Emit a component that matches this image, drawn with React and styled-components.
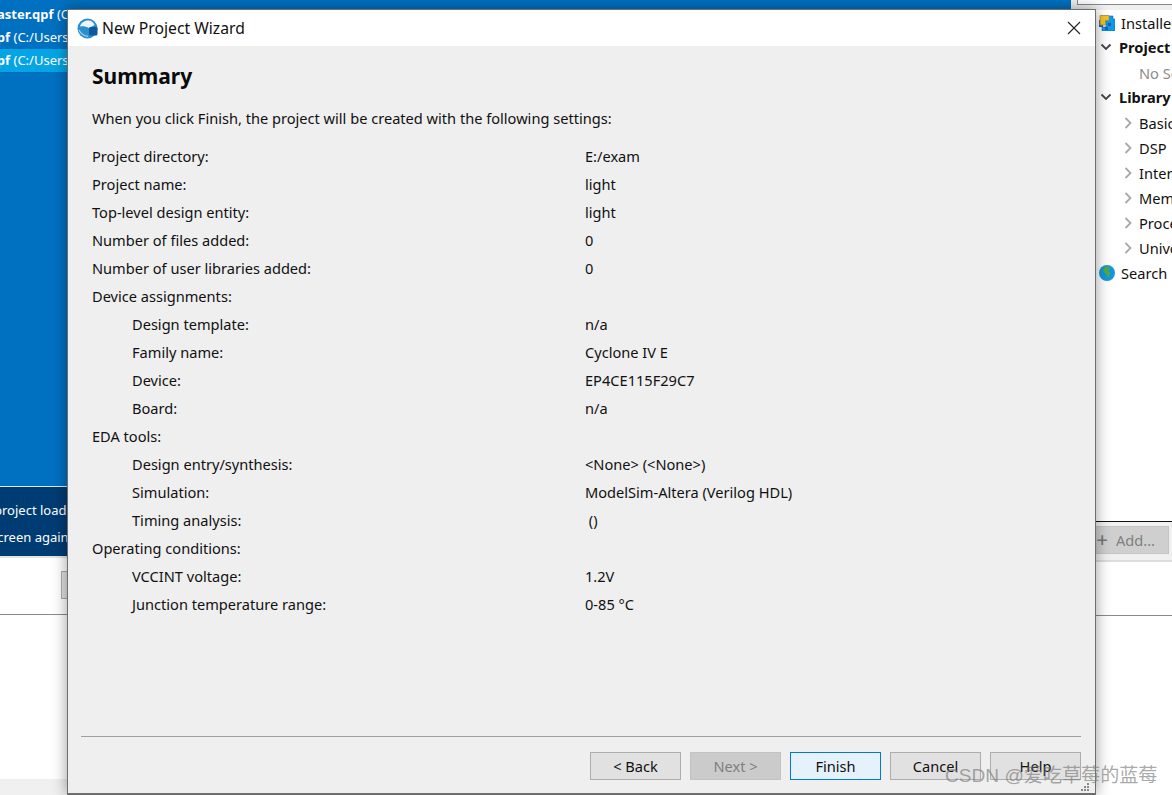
import React from "react";
import styled, { createGlobalStyle } from "styled-components";

const Global = createGlobalStyle`
  html, body { margin: 0; padding: 0; width: 1172px; height: 795px; overflow: hidden; background: #fff; }
  body { font-family: "Noto Sans", "Open Sans", sans-serif; font-size: 14.6px; color: #111; }
`;

const Desktop = styled.div`
  position: relative;
  display: flex;
  width: 1172px;
  height: 795px;
  overflow: hidden;
`;

const Main = styled.div`
  width: 1071px;
  height: 795px;
  display: flex;
  flex-direction: column;
  background: #fff;
`;

const RecentPane = styled.div`
  flex: none;
  background: #0071c1;
  border-bottom: 1px solid #dfeaf3;
  padding-top: 3px;
  height: 483px;
  overflow: hidden;
`;

const RecentRow = styled.div`
  height: 23px;
  line-height: 22px;
  white-space: nowrap;
  color: #fff;
  font-size: 13px;
  background: ${(p) => (p.$active ? "#05a4e4" : "transparent")};
  b { font-weight: 700; }
  text-indent: ${(p) => p.$shift}px;
`;

const Notice = styled.div`
  height: 69px;
  flex: none;
  background: #003c74;
  color: #fff;
  font-size: 13px;
  line-height: 27px;
  padding-top: 10px;
  box-sizing: border-box;
  white-space: nowrap;
`;

const NoticeLine = styled.div`
  text-indent: ${(p) => p.$shift}px;
`;

const ToolStrip = styled.div`
  height: 59px;
  flex: none;
  border-top: 2px solid #e4e4e4;
  border-bottom: 1px solid #8a8a8a;
  box-sizing: border-box;
  padding: 13px 0 0 61px;
  background: #fff;
`;

const StripButton = styled.div`
  width: 20px;
  height: 28px;
  background: #e1e1e1;
  border: 1px solid #adadad;
  box-sizing: border-box;
`;

const Output = styled.div`
  flex: 1;
  background: #fff;
`;

const StatusBar = styled.div`
  height: 16px;
  flex: none;
  background: #f0f0f0;
`;

const Side = styled.div`
  width: 101px;
  height: 795px;
  flex: none;
  background: #fff;
  display: flex;
  flex-direction: column;
`;

const SideTop = styled.div`
  height: 10px;
  flex: none;
  background: #f0f0f0;
  padding-left: 6px;
  box-sizing: border-box;
`;

const SearchBox = styled.div`
  height: 5px;
  background: #fff;
  border: 1px solid #8a8a8a;
  border-top: none;
  border-right: none;
  box-sizing: border-box;
`;

const Tree = styled.div`
  height: 511px;
  flex: none;
  padding: 0 0 0 27px;
  box-sizing: border-box;
  overflow: hidden;
`;

const TreeRow = styled.div`
  height: 25px;
  box-sizing: border-box;
  display: flex;
  align-items: center;
  white-space: nowrap;
  padding-left: ${(p) => p.$indent}px;
  padding-bottom: ${(p) => (p.$bold ? 2 : 0)}px;
  gap: ${(p) => p.$gap}px;
  font-weight: ${(p) => (p.$bold ? 700 : 400)};
  color: ${(p) => (p.$muted ? "#8c8c8c" : "#111")};
  font-size: 14.6px;
  svg { flex: none; }
`;

const AddBar = styled.div`
  height: 41px;
  flex: none;
  border-top: 1px solid #111;
  border-bottom: 2px solid #dcdcdc;
  background: #f0f0f0;
  box-sizing: border-box;
  padding: 4px 3px 0 0;
`;

const AddButton = styled.div`
  height: 28px;
  background: #cfcfcf;
  border: 1px solid #c4c4c4;
  box-sizing: border-box;
  display: flex;
  align-items: center;
  justify-content: flex-end;
  gap: 8px;
  padding-right: 13px;
  color: #808080;
  font-size: 14.6px;
`;

const PlusSign = styled.span`
  font-size: 20px;
  line-height: 20px;
  font-weight: 500;
  color: #777;
`;

const SideRule = styled.div`
  height: 54px;
  flex: none;
  border-bottom: 1px solid #8a8a8a;
  box-sizing: border-box;
`;

const Dialog = styled.div`
  position: absolute;
  left: 67px;
  top: 9px;
  width: 1029px;
  height: 786px;
  border: 1px solid #6e6e6e;
  border-bottom-width: 2px;
  box-sizing: border-box;
  background: #efefef;
  display: flex;
  flex-direction: column;
  box-shadow: 0 0 14px rgba(0, 0, 0, 0.4);
`;

const TitleBar = styled.div`
  height: 36px;
  flex: none;
  background: #fff;
  display: flex;
  align-items: center;
  padding: 0 14px 0 9px;
  gap: 4px;
  font-size: 15.7px;
`;

const TitleText = styled.span`
  flex: 1;
  color: #111;
`;

const Body = styled.div`
  flex: 1;
  padding: 0 14px 0 24px;
  display: flex;
  flex-direction: column;
  min-height: 0;
`;

const Heading = styled.h1`
  margin: 15px 0 0;
  font-size: 21px;
  line-height: 30px;
  font-weight: 700;
  color: #0a0a0a;
`;

const Intro = styled.p`
  margin: 13px 0 0;
  line-height: 28px;
`;

const Settings = styled.div`
  margin-top: 10px;
  display: flex;
  flex-direction: column;
`;

const Setting = styled.div`
  height: 28px;
  line-height: 28px;
  display: grid;
  grid-template-columns: 493px 1fr;
`;

const SettingName = styled.span`
  padding-left: ${(p) => (p.$sub ? 40 : 0)}px;
`;

const Footer = styled.div`
  margin: auto 0 0 -11px;
  border-top: 1px solid #a0a0a0;
  height: 41px;
  flex: none;
  display: flex;
  justify-content: flex-end;
  align-items: flex-start;
  padding-top: 15px;
  gap: 9px;
`;

const Button = styled.button`
  width: 91px;
  height: 28px;
  margin: 0;
  padding: 0;
  font: inherit;
  color: ${(p) => (p.$disabled ? "#808080" : "#111")};
  background: ${(p) => (p.$disabled ? "#cbcbcb" : p.$primary ? "#e5f1fb" : "#e1e1e1")};
  border: 1px solid ${(p) => (p.$disabled ? "#c2c2c2" : p.$primary ? "#0078d7" : "#adadad")};
`;

const Watermark = styled.div`
  position: absolute;
  left: 945px;
  top: 762px;
  font-family: "Liberation Sans", "Noto Sans CJK SC", sans-serif;
  font-size: 19.1px;
  line-height: 28px;
  color: rgba(120, 120, 120, 0.65);
  white-space: nowrap;
`;

const Grip = styled.svg`
  position: absolute;
  left: 1081px;
  top: 783px;
`;

const Chevron = ({ open }) => (
  <svg width="12" height="12" viewBox="0 0 12 12" fill="none" stroke={open ? "#444" : "#a8a8a8"} strokeWidth="1.8">
    {open ? <path d="M1.5 3.5 6 8l4.5-4.5" /> : <path d="M3.500 1 8.500 6l-5 5" />}
  </svg>
);

const Logo = () => (
  <svg width="21" height="21" viewBox="0 0 21 21">
    <circle cx="10.5" cy="10.5" r="10" fill="#2a8fcf" />
    <path d="M3 8.500C4 4.500 8 2 12 2.500c3 .4 5 2.500 5.500 4.500L12 10C9 8.400 6 8 3 8.500z" fill="#eaf4fa" />
    <rect x="12" y="9" width="8.500" height="8.500" rx="1.500" fill="#0c5a9e" />
    <path d="M2 12c2 4 5.500 6 9 6.400" stroke="#a9d3ec" strokeWidth="1.200" fill="none" />
  </svg>
);

const CloseIcon = () => (
  <svg width="14" height="14" viewBox="0 0 14 14" stroke="#222" strokeWidth="1.100" fill="none">
    <path d="M1 1l12 12M13 1 1 13" />
  </svg>
);

const PuzzleIcon = () => (
  <svg width="16" height="16" viewBox="0 0 16 16">
    <rect x="0" y="5" width="4" height="7" fill="#1a5fb0" />
    <path d="M5 1h9v3h2v12H3v-4h4V8H5z" fill="#0d9be8" stroke="#1463b5" strokeWidth=".6" />
    <path d="M1 0.500h9v5H6.500v4.500H1z" fill="#f3c51c" stroke="#a9895a" strokeWidth=".8" />
    <path d="M9 8h3v3H9zM6 12h3v3H6z" fill="#1463b5" />
  </svg>
);

const GlobeIcon = () => (
  <svg width="16" height="16" viewBox="0 0 16 16">
    <circle cx="8" cy="8" r="8" fill="#1496e0" />
    <path d="M6 2.200c2-.8 4.500-.4 5 1 .3 1-1.400 1.400-2 2.500-.3.7 1.800 1 2.200 2.200.3 1-1 2.600-1.800 4-.6 1-1.300.6-1.400-.5-.1-1.400-.4-2.200-1.400-2.800C5.400 7.900 3.800 7 4 5.500 4.200 4 5 3 6 2.200z" fill="#4fae3a" />
  </svg>
);

const settings = [
  ["Project directory:", "E:/exam"],
  ["Project name:", "light"],
  ["Top-level design entity:", "light"],
  ["Number of files added:", "0"],
  ["Number of user libraries added:", "0"],
  ["Device assignments:", ""],
  ["Design template:", "n/a", true],
  ["Family name:", "Cyclone IV E", true],
  ["Device:", "EP4CE115F29C7", true],
  ["Board:", "n/a", true],
  ["EDA tools:", ""],
  ["Design entry/synthesis:", "<None> (<None>)", true],
  ["Simulation:", "ModelSim-Altera (Verilog HDL)", true],
  ["Timing analysis:", "\u00a0()", true],
  ["Operating conditions:", ""],
  ["VCCINT voltage:", "1.2V", true],
  ["Junction temperature range:", "0-85 \u00b0C", true],
];

const library = ["Basic", "DSP", "Interface", "Memory", "Processors", "University"];

export default function App() {
  return (
    <>
      <Global />
      <Desktop>
        <Main>
          <RecentPane>
            <RecentRow $shift={-43}><b>top_master.qpf</b> (C:/Users/</RecentRow>
            <RecentRow $shift={-37}><b>top.qpf</b> (C:/Users/</RecentRow>
            <RecentRow $shift={-37} $active><b>top.qpf</b> (C:/Users/</RecentRow>
          </RecentPane>
          <Notice>
            <NoticeLine $shift={-6}>project load</NoticeLine>
            <NoticeLine $shift={-9}>screen again</NoticeLine>
          </Notice>
          <ToolStrip><StripButton /></ToolStrip>
          <Output />
          <StatusBar />
        </Main>
        <Side>
          <SideTop><SearchBox /></SideTop>
          <Tree>
            <TreeRow $indent={1} $gap={6}><PuzzleIcon />Installed</TreeRow>
            <TreeRow $indent={2} $bold $gap={7}><Chevron open />Project</TreeRow>
            <TreeRow $indent={41} $gap={0} $muted>No Selection</TreeRow>
            <TreeRow $indent={2} $bold $gap={7}><Chevron open />Library</TreeRow>
            {library.map((name) => (
              <TreeRow key={name} $indent={24} $gap={5}>
                <Chevron />
                {name}
              </TreeRow>
            ))}
            <TreeRow $indent={1} $gap={6}><GlobeIcon />Search</TreeRow>
          </Tree>
          <AddBar>
            <AddButton>
              <PlusSign>+</PlusSign>
              <span>Add...</span>
            </AddButton>
          </AddBar>
          <SideRule />
        </Side>
        <Dialog>
          <TitleBar>
            <Logo />
            <TitleText>New Project Wizard</TitleText>
            <CloseIcon />
          </TitleBar>
          <Body>
            <Heading>Summary</Heading>
            <Intro>When you click Finish, the project will be created with the following settings:</Intro>
            <Settings>
              {settings.map(([name, value, sub]) => (
                <Setting key={name}>
                  <SettingName $sub={sub}>{name}</SettingName>
                  <span>{value}</span>
                </Setting>
              ))}
            </Settings>
            <Footer>
              <Button>&lt; Back</Button>
              <Button $disabled>Next &gt;</Button>
              <Button $primary>Finish</Button>
              <Button>Cancel</Button>
              <Button>Help</Button>
            </Footer>
          </Body>
        </Dialog>
        <Watermark>CSDN @爱吃草莓的蓝莓</Watermark>
        <Grip width="10" height="10" viewBox="0 0 10 10" fill="#8a8a8a">
          <rect x="6" y="0" width="2" height="2" />
          <rect x="3" y="3" width="2" height="2" />
          <rect x="6" y="3" width="2" height="2" />
          <rect x="0" y="6" width="2" height="2" />
          <rect x="3" y="6" width="2" height="2" />
          <rect x="6" y="6" width="2" height="2" />
        </Grip>
      </Desktop>
    </>
  );
}
